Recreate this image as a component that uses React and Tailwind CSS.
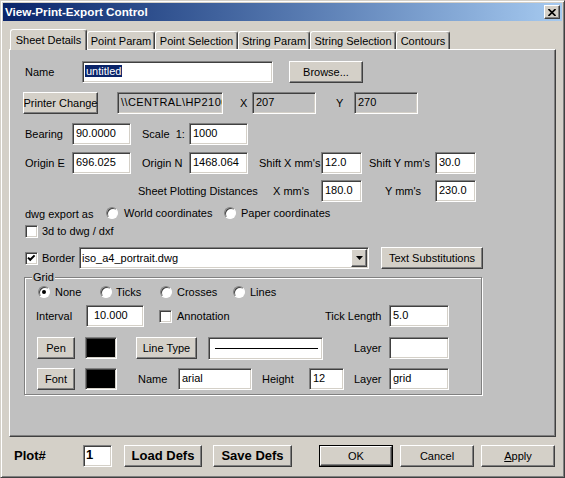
const sunken =
  'border border-t-[#808080] border-l-[#808080] border-r-white border-b-white shadow-[inset_1px_1px_0_#404040,inset_-1px_-1px_0_#d4d0c8]';
const raised =
  'bg-[#d4d0c8] border border-t-white border-l-white border-r-[#404040] border-b-[#404040] shadow-[inset_-1px_-1px_0_#808080,inset_1px_1px_0_#d4d0c8]';

function Field({ w, value, bg = 'bg-white', pad = 'px-[3px]', className = '' }) {
  return (
    <div className={`${sunken} ${bg} ${w} ${pad} h-[22px] pt-[2px] leading-[14px] whitespace-nowrap overflow-hidden shrink-0 ${className}`}>
      {value}
    </div>
  );
}

function Btn({ w, children, className = '' }) {
  return (
    <div className={`${raised} ${w} h-[22px] flex items-center justify-center shrink-0 whitespace-nowrap ${className}`}>
      {children}
    </div>
  );
}

function Label({ children, className = '' }) {
  return <span className={`shrink-0 whitespace-pre ${className}`}>{children}</span>;
}

function Radio({ on, className = '' }) {
  return (
    <span className={`w-[12px] h-[12px] shrink-0 rounded-full bg-white border border-t-[#808080] border-l-[#808080] border-r-white border-b-white shadow-[inset_1px_1px_0_#404040] flex items-center justify-center ${className}`}>
      {on && <span className="w-[4px] h-[4px] rounded-full bg-black" />}
    </span>
  );
}

function Check({ on, className = '' }) {
  return (
    <span className={`${sunken} w-[13px] h-[13px] bg-white shrink-0 flex items-center justify-center ${className}`}>
      {on && (
        <svg width="9" height="9" viewBox="0 0 9 9">
          <path d="M1 3.6 L3.2 5.8 L7.6 1.4" fill="none" stroke="#000" strokeWidth="2" />
        </svg>
      )}
    </span>
  );
}

function Swatch({ className = '' }) {
  return <div className={`${sunken} bg-black w-[32px] h-[22px] shrink-0 ${className}`} />;
}

const tabs = [
  { label: 'Sheet Details', w: 'w-[77px]', on: true },
  { label: 'Point Param', w: 'w-[68px]' },
  { label: 'Point Selection', w: 'w-[83px]' },
  { label: 'String Param', w: 'w-[72px]' },
  { label: 'String Selection', w: 'w-[86px]' },
  { label: 'Contours', w: 'w-[54px]' },
];

export default function App() {
  return (
    <div className="w-[565px] h-[478px] overflow-hidden bg-[#d4d0c8] font-['Liberation_Sans',Arial,sans-serif] text-[11px] text-black border border-t-[#d4d0c8] border-l-[#d4d0c8] border-r-[#404040] border-b-[#404040] shadow-[inset_1px_1px_0_#ffffff,inset_-1px_-1px_0_#808080] p-[2px] flex flex-col">

      {/* Title bar */}
      <div className="h-[18px] shrink-0 flex items-center bg-linear-to-r from-[#0a246a] to-[#a6caf0]">
        <span className="pl-[2px] text-white font-bold text-[11.7px] leading-none">View-Print-Export Control</span>
        <div className={`${raised} ml-auto mr-[2px] w-[16px] h-[14px] flex items-center justify-center`}>
          <svg width="8" height="7" viewBox="0 0 8 7">
            <path d="M0.5 0 L7.5 7 M7.5 0 L0.5 7" stroke="#000" strokeWidth="1.6" />
          </svg>
        </div>
      </div>

      <div className="flex flex-col px-[6px]">
        {/* Tabs */}
        <div className="mt-[8px] h-[20px] flex items-end">
          {tabs.map(({ label, w, on }) => (
            <div
              key={label}
              className={`${w} shrink-0 bg-[#d4d0c8] border-t border-l border-r border-t-white border-l-white border-r-[#404040] rounded-t-[3px] shadow-[inset_-1px_0_0_#808080] flex items-center justify-center whitespace-nowrap ${
                on ? 'ml-[1px] h-[21px] -mb-[1px] relative z-10' : 'h-[18px] pt-[1px]'
              }`}
            >
              {label}
            </div>
          ))}
        </div>

        {/* Panel */}
        <div className="w-[547px] h-[388px] bg-[#c0c0c0] border border-t-white border-l-white border-r-[#404040] border-b-[#404040] shadow-[inset_-1px_-1px_0_#808080] flex flex-col">

          <div className="mt-[11px] h-[22px] flex items-center">
            <Label className="ml-[15px] w-[57px]">Name</Label>
            <Field w="w-[191px]" value={<span className="bg-[#0a246a] text-white -ml-[1px] px-[1px]">untitled</span>} />
            <Btn w="w-[74px]" className="ml-[16px]">Browse...</Btn>
          </div>

          <div className="mt-[9px] h-[22px] flex items-center">
            <Btn w="w-[75px]" className="ml-[13px]">Printer Change</Btn>
            <Field w="w-[106px]" bg="bg-[#c0c0c0]" className="ml-[19px] tracking-[0.4px]" value={'\\\\CENTRAL\\HP2100'} />
            <Label className="w-[29px] pl-[17px]">X</Label>
            <Field w="w-[64px]" bg="bg-[#c0c0c0]" value="207" />
            <Label className="w-[38px] pl-[20px]">Y</Label>
            <Field w="w-[64px]" bg="bg-[#c0c0c0]" value="270" />
          </div>

          <div className="mt-[9px] h-[22px] flex items-center">
            <Label className="ml-[15px] w-[47px]">Bearing</Label>
            <Field w="w-[59px]" value="90.0000" />
            <Label className="w-[58px] pl-[11px]">Scale  1:</Label>
            <Field w="w-[59px]" value="1000" />
          </div>

          <div className="mt-[7px] h-[22px] flex items-center">
            <Label className="ml-[15px] w-[47px]">Origin E</Label>
            <Field w="w-[59px]" value="696.025" />
            <Label className="w-[58px] pl-[11px]">Origin N</Label>
            <Field w="w-[59px]" value="1468.064" />
            <Label className="w-[73px] pl-[11px]">Shift X mm's</Label>
            <Field w="w-[41px]" value="12.0" />
            <Label className="w-[73px] pl-[7px]">Shift Y mm's</Label>
            <Field w="w-[41px]" value="30.0" />
          </div>

          <div className="mt-[6px] h-[22px] flex items-center">
            <Label className="ml-[128px] w-[135px]">Sheet Plotting Distances</Label>
            <Label className="w-[48px]">X mm's</Label>
            <Field w="w-[41px]" value="180.0" />
            <Label className="w-[73px] pl-[23px]">Y mm's</Label>
            <Field w="w-[41px]" value="230.0" />
          </div>

          <div className="mt-[4px] h-[14px] flex items-center">
            <Label className="ml-[15px] w-[81px] pt-[2px]">dwg export as</Label>
            <Radio />
            <Label className="ml-[6px] w-[100px]">World coordinates</Label>
            <Radio />
            <Label className="ml-[5px]">Paper coordinates</Label>
          </div>

          <div className="mt-[5px] h-[13px] flex items-center">
            <Check className="ml-[15px]" />
            <Label className="ml-[4px]">3d to dwg / dxf</Label>
          </div>

          <div className="mt-[9px] h-[22px] flex items-center">
            <Check on className="ml-[15px]" />
            <Label className="ml-[4px] w-[37px]">Border</Label>
            <div className={`${sunken} bg-white w-[290px] h-[22px] shrink-0 flex items-center`}>
              <span className="pl-[2px]">iso_a4_portrait.dwg</span>
              <div className={`${raised} ml-auto mr-[1px] w-[16px] h-[18px] flex items-center justify-center`}>
                <svg width="7" height="4" viewBox="0 0 7 4">
                  <path d="M0 0 H7 L3.5 4 Z" fill="#000" />
                </svg>
              </div>
            </div>
            <Btn w="w-[102px]" className="ml-[12px]">Text Substitutions</Btn>
          </div>

          {/* Grid group */}
          <div className="mt-[8px] ml-[14px] w-[458px] h-[118px] border border-[#808080] shadow-[inset_1px_1px_0_#ffffff,1px_1px_0_#ffffff] flex flex-col">
            <span className="ml-[7px] -mt-[7px] h-[13px] leading-[13px] px-[1px] w-fit bg-[#c0c0c0]">Grid</span>

            <div className="mt-[2px] h-[12px] flex items-center">
              <Radio on className="ml-[13px]" />
              <Label className="ml-[5px] w-[45px]">None</Label>
              <Radio />
              <Label className="ml-[4px] w-[44px]">Ticks</Label>
              <Radio />
              <Label className="ml-[5px] w-[56px]">Crosses</Label>
              <Radio />
              <Label className="ml-[5px]">Lines</Label>
            </div>

            <div className="mt-[7px] h-[22px] flex items-center">
              <Label className="ml-[11px] w-[50px]">Interval</Label>
              <Field w="w-[58px]" pad="pl-[7px] pr-[3px]" value="10.000" />
              <Check className="ml-[15px]" />
              <Label className="ml-[5px] w-[148px]">Annotation</Label>
              <Label className="w-[64px]">Tick Length</Label>
              <Field w="w-[60px]" value="5.0" />
            </div>

            <div className="mt-[10px] h-[22px] flex items-center">
              <Btn w="w-[38px]" className="ml-[12px]">Pen</Btn>
              <Swatch className="ml-[10px]" />
              <Btn w="w-[61px]" className="ml-[19px]">Line Type</Btn>
              <div className={`${sunken} bg-white ml-[11px] w-[115px] h-[23px] shrink-0 flex items-center`}>
                <div className="ml-[6px] mr-[4px] h-[1px] flex-1 bg-black" />
              </div>
              <Label className="ml-[31px] w-[35px]">Layer</Label>
              <Field w="w-[60px]" value="" />
            </div>

            <div className="mt-[9px] h-[22px] flex items-center">
              <Btn w="w-[38px]" className="ml-[12px]">Font</Btn>
              <Swatch className="ml-[10px]" />
              <Label className="ml-[21px] w-[40px]">Name</Label>
              <Field w="w-[74px]" value="arial" />
              <Label className="ml-[10px] w-[47px]">Height</Label>
              <Field w="w-[35px]" value="12" />
              <Label className="ml-[10px] w-[35px]">Layer</Label>
              <Field w="w-[60px]" value="grid" />
            </div>
          </div>
        </div>

        {/* Bottom row */}
        <div className="mt-[8px] h-[22px] flex items-center">
          <Label className="ml-[5px] w-[69px] font-bold text-[13px]">Plot#</Label>
          <Field w="w-[29px]" pad="px-[2px]" className="font-bold text-[13px]" value="1" />
          <Btn w="w-[78px]" className="ml-[12px] font-bold text-[13px]">Load Defs</Btn>
          <Btn w="w-[79px]" className="ml-[11px] font-bold text-[13px]">Save Defs</Btn>
          <div className="ml-[27px] w-[74px] h-[22px] shrink-0 border border-black">
            <div className={`${raised} w-full h-full flex items-center justify-center`}>OK</div>
          </div>
          <Btn w="w-[74px]" className="ml-[7px]">Cancel</Btn>
          <Btn w="w-[74px]" className="ml-[7px]"><span className="underline">A</span>pply</Btn>
        </div>
      </div>
    </div>
  );
}
